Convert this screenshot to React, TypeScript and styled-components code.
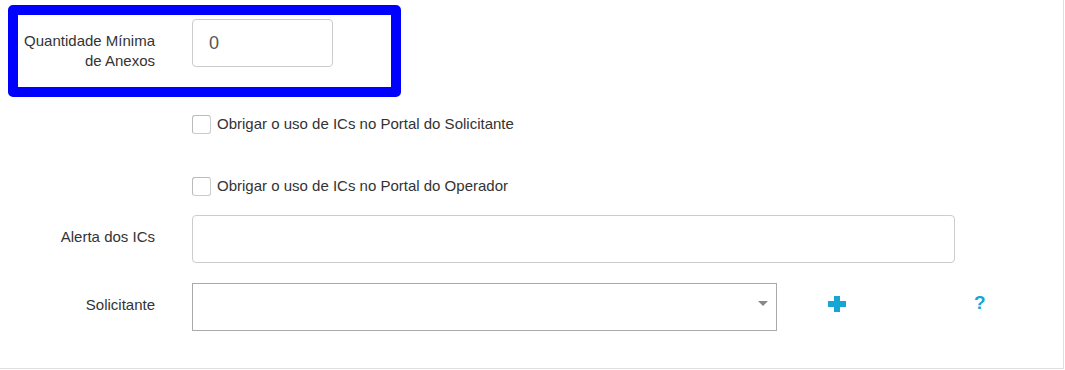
import { createGlobalStyle, styled } from "styled-components";

const GlobalStyle = createGlobalStyle`
  html, body {
    margin: 0;
    padding: 0;
    background: #fff;
  }
  body {
    font-family: "Liberation Sans", Arial, sans-serif;
    color: #333;
  }
`;

const Panel = styled.div`
  position: relative;
  box-sizing: border-box;
  width: 1064px;
  height: 369px;
  padding-top: 19px;
  border-right: 1px solid #dedede;
  border-bottom: 1px solid #dedede;
  background: #fff;
`;

// annotation frame drawn over the first field
const Highlight = styled.div`
  position: absolute;
  left: 8px;
  top: 5px;
  width: 393px;
  height: 92px;
  box-sizing: border-box;
  border: 10px solid #0000ff;
  border-radius: 5px;
  pointer-events: none;
`;

const FormRow = styled.div<{ $mb?: number; $center?: boolean }>`
  display: grid;
  grid-template-columns: 155px 1fr;
  column-gap: 37px;
  align-items: ${(p) => (p.$center ? "center" : "start")};
  margin-bottom: ${(p) => p.$mb ?? 0}px;
`;

const Label = styled.label`
  padding-top: 12px;
  text-align: right;
  font-size: 15px;
  line-height: 20px;
  color: #333;
`;

const TextInput = styled.div<{ $w: number }>`
  box-sizing: border-box;
  width: ${(p) => p.$w}px;
  height: 48px;
  padding: 0 16px;
  display: flex;
  align-items: center;
  border: 1px solid #ccc;
  border-radius: 4px;
  font-size: 18px;
  color: #555;
`;

const CheckLine = styled.div`
  display: flex;
  align-items: center;
  gap: 6px;
  font-size: 15px;
  line-height: 20px;
  color: #333;
`;

const CheckBox = styled.span`
  box-sizing: border-box;
  width: 19px;
  height: 19px;
  border: 1px solid #ccc;
  border-top-color: #bbb;
  border-left-color: #bbb;
  border-radius: 3px;
  background: #fff;
`;

const SelectRow = styled.div`
  display: flex;
  align-items: center;
`;

const Select = styled.div`
  position: relative;
  box-sizing: border-box;
  width: 585px;
  height: 48px;
  border: 1px solid #aaa;
  background: #fff;
`;

const Caret = styled.span`
  position: absolute;
  right: 8px;
  top: 17px;
  width: 0;
  height: 0;
  border-left: 5px solid transparent;
  border-right: 5px solid transparent;
  border-top: 5px solid #888;
`;

const IconButton = styled.span<{ $ml: number; $lift: number }>`
  margin-left: ${(p) => p.$ml}px;
  margin-bottom: ${(p) => p.$lift * 2}px;
  display: flex;
  align-items: center;
  color: #17a5d4;
  cursor: pointer;
`;

const Help = styled.span`
  font-weight: bold;
  font-size: 19px;
  line-height: 20px;
  color: #17a5d4;
`;

export default function App() {
  return (
    <>
      <GlobalStyle />
      <Panel>
        <FormRow $mb={43}>
          <Label>
            Quantidade Mínima
            <br />
            de Anexos
          </Label>
          <TextInput $w={141}>0</TextInput>
        </FormRow>

        <FormRow $mb={42} $center>
          <span />
          <CheckLine>
            <CheckBox />
            Obrigar o uso de ICs no Portal do Solicitante
          </CheckLine>
        </FormRow>

        <FormRow $mb={19} $center>
          <span />
          <CheckLine>
            <CheckBox />
            Obrigar o uso de ICs no Portal do Operador
          </CheckLine>
        </FormRow>

        <FormRow $mb={20}>
          <Label>Alerta dos ICs</Label>
          <TextInput $w={763} />
        </FormRow>

        <FormRow>
          <Label>Solicitante</Label>
          <SelectRow>
            <Select>
              <Caret />
            </Select>
            <IconButton $ml={51} $lift={3}>
              <svg width="18" height="16" viewBox="0 0 18 16">
                <rect x="0" y="5" width="18" height="6" fill="currentColor" />
                <rect x="6" y="0" width="6" height="16" fill="currentColor" />
              </svg>
            </IconButton>
            <IconButton $ml={128} $lift={4}>
              <Help>?</Help>
            </IconButton>
          </SelectRow>
        </FormRow>

        <Highlight />
      </Panel>
    </>
  );
}
